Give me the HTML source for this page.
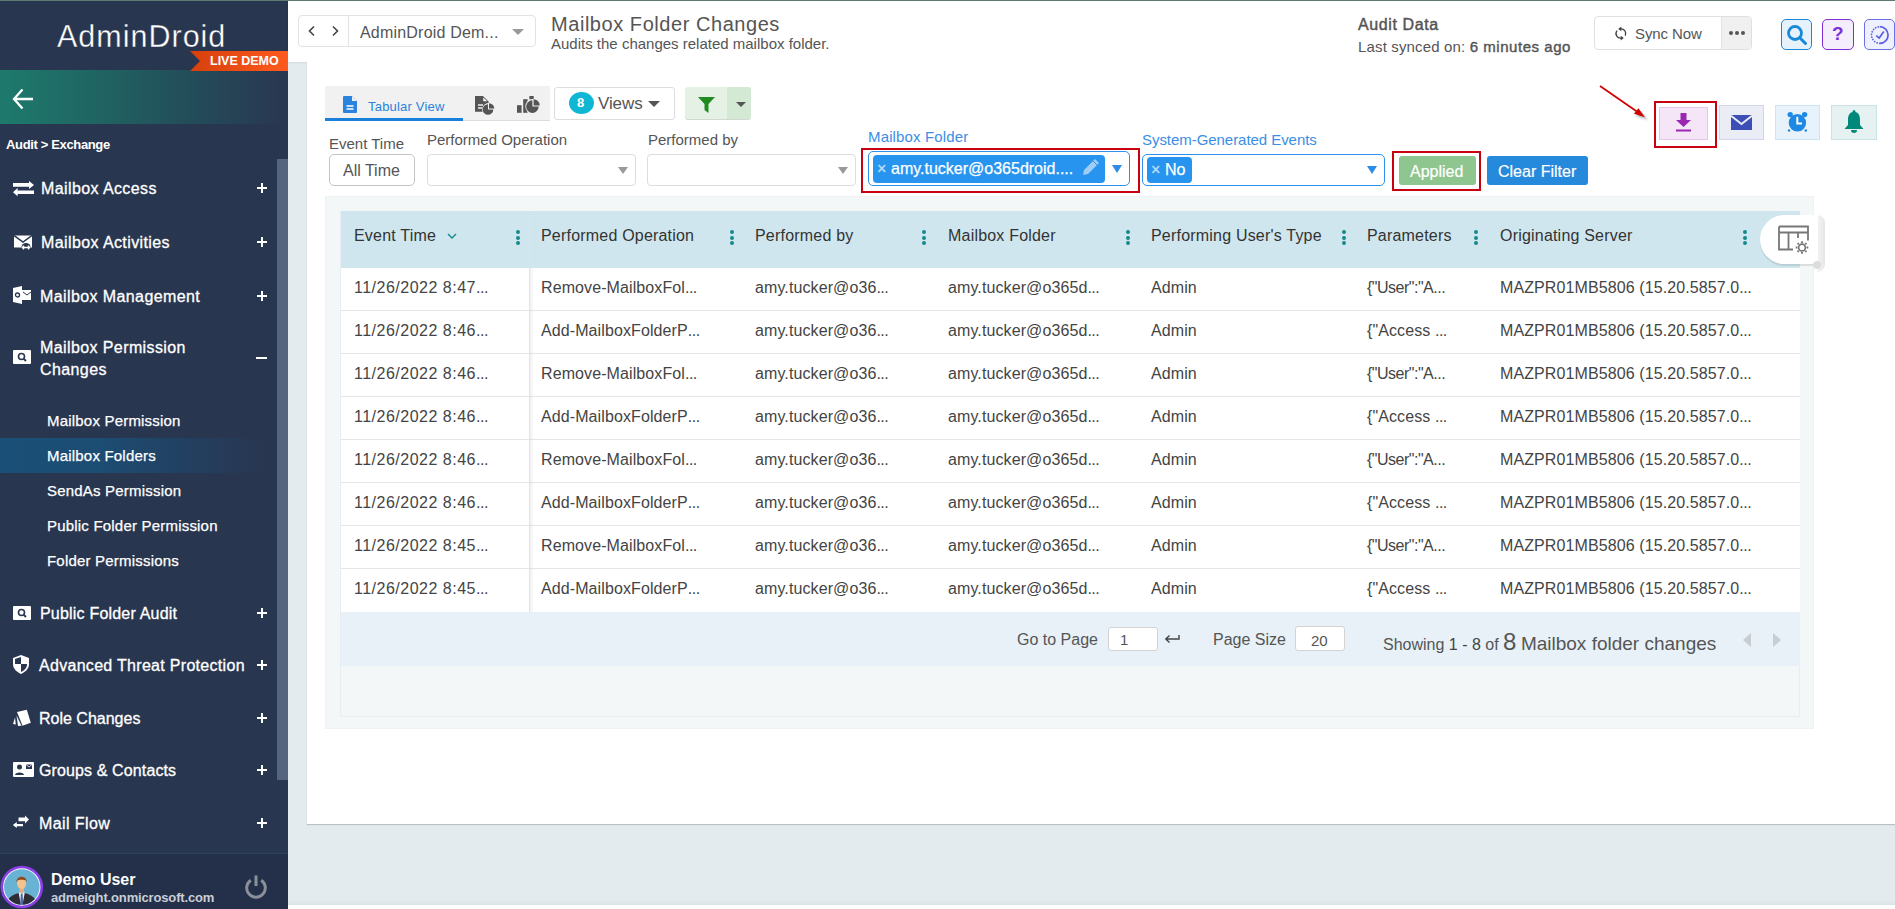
<!DOCTYPE html>
<html><head><meta charset="utf-8">
<style>
*{box-sizing:border-box;margin:0;padding:0}
html,body{width:1895px;height:909px;overflow:hidden}
body{position:relative;background:#e4ebee;font-family:"Liberation Sans",sans-serif;color:#333}
.a{position:absolute}
.nw{white-space:nowrap}
/* sidebar */
#sb{left:0;top:0;width:288px;height:909px;background:#293650}
#topline{left:0;top:0;width:1895px;height:1px;background:#5f7a72;z-index:5}
.mi{position:absolute;left:41px;color:#fff;font-size:16px;letter-spacing:0.4px;-webkit-text-stroke:0.3px #fff;white-space:nowrap;line-height:16px}
.pl{position:absolute;left:257px;width:10px;height:10px;margin-top:1px}
.pl:before{content:"";position:absolute;left:0;top:4px;width:10px;height:2px;background:#fff}
.pl:after{content:"";position:absolute;left:4px;top:0;width:2px;height:10px;background:#fff}
.si{position:absolute;left:47px;color:#fff;font-size:15px;letter-spacing:0.2px;-webkit-text-stroke:0.25px #fff;white-space:nowrap;line-height:15px}
/* header */
#hdr{left:288px;top:0;width:1607px;height:62px;background:#fff;box-shadow:0 1px 2px rgba(0,0,0,0.08)}
#card{left:307px;top:62px;width:1588px;height:762px;background:#fff;box-shadow:0 1px 1px rgba(0,0,0,0.18)}
.lbl{position:absolute;font-size:15px;color:#555;white-space:nowrap;line-height:15px}
.dd{position:absolute;border:1px solid #ddd;border-radius:4px;background:#fff}
.car{position:absolute;width:0;height:0;border-left:5px solid transparent;border-right:5px solid transparent;border-top:7px solid #999}
.th{position:absolute;top:228px;font-size:16px;color:#333;white-space:nowrap;line-height:16px;letter-spacing:0.2px}
.kb{position:absolute;top:230px;width:4px;height:16px}
.kb i{position:absolute;left:0;width:4px;height:4px;border-radius:50%;background:#168a8a}
.td{position:absolute;font-size:16px;color:#444;white-space:nowrap;line-height:16px;letter-spacing:0.1px}
.el{letter-spacing:-0.5px}
.rl{position:absolute;left:341px;width:1459px;height:1px;background:#e6e6e6}
</style></head>
<body>
<div id="topline" class="a"></div>
<!-- SIDEBAR -->
<div id="sb" class="a">
  <div class="a nw" style="left:57px;top:19px;font-size:30.5px;color:#fff;letter-spacing:1.0px;line-height:34px;-webkit-text-stroke:0.35px #293650">AdminDroid</div>
  <svg class="a" style="left:190px;top:51px;z-index:2" width="98" height="20" viewBox="0 0 98 20" preserveAspectRatio="none"><defs><linearGradient id="lg1" x1="0" x2="1"><stop offset="0" stop-color="#d6400c"/><stop offset="1" stop-color="#ff5a1e"/></linearGradient></defs><path d="M0 0H98V20H0L10 10Z" fill="url(#lg1)"/></svg>
  <div class="a nw" style="z-index:3;left:210px;top:54px;font-size:12.5px;font-weight:bold;color:#fff;line-height:14px">LIVE DEMO</div>
  <div class="a" style="left:0;top:70px;width:288px;height:54px;background:linear-gradient(90deg,#1e7a6c 0%,#1f6763 30%,#234d5a 65%,#293650 100%)"></div>
  <svg class="a" style="left:12px;top:88px" width="22" height="22" viewBox="0 0 22 22"><path d="M21 11H3M10.5 1.5L2 11L10.5 20.5" stroke="#fff" stroke-width="2.3" fill="none"/></svg>
  <div class="a nw" style="left:6px;top:138px;font-size:13px;font-weight:bold;color:#fff;line-height:14px;letter-spacing:-0.35px">Audit &gt; Exchange</div>
  <!-- scrollbar -->
  <div class="a" style="left:277px;top:159px;width:11px;height:621px;background:#56657f"></div>

  <!-- menu items -->
  <svg class="a" style="left:13px;top:180px" width="21" height="17" viewBox="0 0 21 17"><path d="M0 3H16V0.9L21 5L16 9V6.8H0Z" fill="#fff"/><path d="M21 10.4H4.6V8L0 12.2L4.6 16.2V14H21Z" fill="#fff"/></svg>
  <div class="mi" style="top:181px">Mailbox Access</div><div class="pl" style="top:182px"></div>

  <svg class="a" style="left:14px;top:235px" width="19" height="17" viewBox="0 0 19 17"><path d="M0 0.5H18V12.5H0Z" fill="#fff"/><path d="M0 0.5L9 7L18 0.5" stroke="#293650" stroke-width="1.5" fill="none"/><circle cx="12" cy="12.5" r="4.6" fill="#293650"/><path d="M8.5 12.5H15.5M10 10.8L8.3 12.5L10 14.2M14 10.8L15.7 12.5L14 14.2" stroke="#fff" stroke-width="1.3" fill="none"/></svg>
  <div class="mi" style="top:235px">Mailbox Activities</div><div class="pl" style="top:236px"></div>

  <svg class="a" style="left:13px;top:286px" width="18" height="18" viewBox="0 0 18 18"><path d="M0 2L9 0V18L0 16Z" fill="#fff"/><rect x="9" y="4" width="9" height="10" fill="#fff"/><circle cx="4.5" cy="9" r="2" stroke="#293650" stroke-width="1.3" fill="none"/><path d="M10 6L14 9L18 6" stroke="#293650" stroke-width="1" fill="none"/></svg>
  <div class="mi" style="top:289px;left:40px">Mailbox Management</div><div class="pl" style="top:290px"></div>

  <svg class="a" style="left:13px;top:350px" width="18" height="14" viewBox="0 0 18 14"><rect x="0" y="0" width="18" height="14" rx="1" fill="#fff"/><circle cx="8.5" cy="6.5" r="3" stroke="#293650" stroke-width="1.6" fill="none"/><path d="M10.8 8.8L13 11" stroke="#293650" stroke-width="1.8"/></svg>
  <div class="mi" style="top:337px;left:40px;line-height:22px">Mailbox Permission<br>Changes</div>
  <div class="a" style="left:256px;top:357px;width:11px;height:2px;background:#fff"></div>

  <div class="si" style="top:413px">Mailbox Permission</div>
  <div class="a" style="left:0;top:438px;width:277px;height:35px;background:linear-gradient(90deg,#1a4f77 0%,#1c4d73 35%,#233f5f 70%,#293650 96%)"></div>
  <div class="si" style="top:448px">Mailbox Folders</div>
  <div class="si" style="top:483px">SendAs Permission</div>
  <div class="si" style="top:518px">Public Folder Permission</div>
  <div class="si" style="top:553px">Folder Permissions</div>

  <svg class="a" style="left:13px;top:606px" width="18" height="14" viewBox="0 0 18 14"><rect x="0" y="0" width="18" height="14" rx="1" fill="#fff"/><circle cx="8.5" cy="6.5" r="3" stroke="#293650" stroke-width="1.6" fill="none"/><path d="M10.8 8.8L13 11" stroke="#293650" stroke-width="1.8"/></svg>
  <div class="mi" style="top:606px;left:40px;letter-spacing:0.2px">Public Folder Audit</div><div class="pl" style="top:607px"></div>

  <svg class="a" style="left:13px;top:655px" width="16" height="19" viewBox="0 0 16 19"><path d="M8 0L16 3V9C16 14 12 17 8 19C4 17 0 14 0 9V3Z" fill="#fff"/><path d="M8 2V9H14V9.5C14 13 11 15.5 8 17V9H2V4Z" fill="#293650"/></svg>
  <div class="mi" style="top:658px;left:39px;letter-spacing:0.3px">Advanced Threat Protection</div><div class="pl" style="top:659px"></div>

  <svg class="a" style="left:12px;top:708px" width="20" height="20" viewBox="0 0 20 20"><path d="M5 4L14.8 1.7L18.8 14.8L10.5 17.7Z" fill="#fff"/><path d="M4.5 7.5L9.5 17.8L6 18Z" fill="#fff"/><path d="M3 9.5L3.8 16.5L1 16Z" fill="#fff"/></svg>
  <div class="mi" style="top:711px;left:39px;letter-spacing:0px">Role Changes</div><div class="pl" style="top:712px"></div>

  <svg class="a" style="left:13px;top:762px" width="21" height="15" viewBox="0 0 21 15"><rect x="0" y="0" width="21" height="15" rx="1" fill="#fff"/><circle cx="6.5" cy="5" r="2.5" fill="#293650"/><path d="M2 13C2 9.5 11 9.5 11 13Z" fill="#293650"/><rect x="13" y="2.5" width="6" height="4.5" fill="#293650"/><path d="M13 2.5L16 5L19 2.5" stroke="#fff" stroke-width="0.8" fill="none"/></svg>
  <div class="mi" style="top:763px;left:39px;letter-spacing:0.12px">Groups &amp; Contacts</div><div class="pl" style="top:764px"></div>

  <svg class="a" style="left:12px;top:815px" width="19" height="15" viewBox="0 0 19 15"><path d="M6.5 2.5H13V0.5L17 4.5L13 8.5V6.3H6.5Z" fill="#fff"/><path d="M11 9H4.8V7L0.8 10L4.8 13V11.2H11Z" fill="#fff"/></svg>
  <div class="mi" style="top:816px;left:39px">Mail Flow</div><div class="pl" style="top:817px"></div>

  <!-- footer -->
  <div class="a" style="left:0;top:853px;width:288px;height:56px;background:#24304a;border-top:1px solid #2b4560"></div>
  <svg class="a" style="left:0;top:865px" width="44" height="44" viewBox="0 0 44 44"><defs><clipPath id="avc"><circle cx="21.8" cy="22" r="17.8"/></clipPath></defs><circle cx="21.8" cy="22" r="21.3" fill="#8a3ee6"/><circle cx="21.8" cy="22" r="18.7" fill="#f4f8fb"/><circle cx="21.8" cy="22" r="17.8" fill="#68b2d4"/><g clip-path="url(#avc)"><rect x="19.5" y="22" width="4.5" height="6" fill="#e6ae7e"/><ellipse cx="21.6" cy="18" rx="4.6" ry="6" fill="#f3c28e"/><path d="M16.5 18C15.5 9.8 27.7 9.8 26.7 18L26.2 16C25.5 14.5 18.5 14 17 16Z" fill="#8c4a1c"/><path d="M6 44C6 32 13 29 21.7 27.5C30.4 29 37.5 32 37.5 44Z" fill="#2e2e34"/><path d="M18.6 27.5L21.7 44L24.8 27.5Z" fill="#f2f4f8"/><path d="M20.8 28.5H22.6L23.2 40L21.7 44L20.2 40Z" fill="#4b69a6"/></g></svg>
  <div class="a nw" style="left:51px;top:871px;font-size:16px;font-weight:bold;color:#fff;line-height:18px">Demo User</div>
  <div class="a nw" style="left:51px;top:891px;font-size:13px;font-weight:bold;color:#c9ced6;line-height:14px;letter-spacing:-0.15px">admeight.onmicrosoft.com</div>
  <svg class="a" style="left:243px;top:874px" width="26" height="26" viewBox="0 0 26 26"><path d="M7.8 6.2A9.3 9.3 0 1 0 18.2 6.2" stroke="#8a8f98" stroke-width="3" fill="none"/><path d="M13 1.5V12" stroke="#8a8f98" stroke-width="3"/></svg>
</div>

<!-- HEADER -->
<div id="hdr" class="a"></div>
<div id="card" class="a"></div>
<!-- header contents -->
<div class="a" style="left:298px;top:15px;width:238px;height:32px;border:1px solid #e2e2e2;border-radius:4px;background:#fff"></div>
<div class="a" style="left:348px;top:16px;width:1px;height:30px;background:#e2e2e2"></div>
<svg class="a" style="left:307px;top:25px" width="10" height="12" viewBox="0 0 10 12"><path d="M7 1.5L2.5 6L7 10.5" stroke="#444" stroke-width="1.6" fill="none"/></svg>
<svg class="a" style="left:330px;top:25px" width="10" height="12" viewBox="0 0 10 12"><path d="M3 1.5L7.5 6L3 10.5" stroke="#444" stroke-width="1.6" fill="none"/></svg>
<div class="a nw" style="left:360px;top:24px;font-size:16px;color:#555;line-height:18px;letter-spacing:0.2px">AdminDroid Dem...</div>
<div class="car" style="left:512px;top:29px;border-left-width:6px;border-right-width:6px;border-top-width:6px;border-top-color:#999"></div>

<div class="a nw" style="left:551px;top:12px;font-size:20px;color:#555;line-height:24px;letter-spacing:0.55px">Mailbox Folder Changes</div>
<div class="a nw" style="left:551px;top:36px;font-size:15px;color:#555;line-height:16px">Audits the changes related mailbox folder.</div>

<div class="a nw" style="left:1358px;top:16px;font-size:16px;color:#555;line-height:18px;letter-spacing:0.6px;-webkit-text-stroke:0.45px #555">Audit Data</div>
<div class="a nw" style="left:1358px;top:38px;font-size:15px;color:#555;line-height:17px;letter-spacing:0.15px">Last synced on: <span style="letter-spacing:0.55px;-webkit-text-stroke:0.4px #555">6 minutes ago</span></div>

<div class="a" style="left:1594px;top:16px;width:158px;height:34px;border:1px solid #e0e0e0;border-radius:4px;background:#fff;overflow:hidden"><div class="a" style="left:126px;top:0;width:32px;height:34px;background:#f0f0f0;border-left:1px solid #e3e3e3"></div></div>
<svg class="a" style="left:1614px;top:26px" width="14" height="15" viewBox="0 0 14 15"><path d="M6.5 2.9A4.6 4.6 0 0 1 11.2 9.6" stroke="#444" stroke-width="1.3" fill="none"/><path d="M7.3 0.6L4.2 2.9L7.3 5.2Z" fill="#444"/><path d="M3.1 4.6A4.6 4.6 0 0 0 7.5 12.1" stroke="#444" stroke-width="1.3" fill="none"/><path d="M6.7 9.8L9.8 12.1L6.7 14.4Z" fill="#444"/></svg>
<div class="a nw" style="left:1635px;top:25px;font-size:15px;color:#555;line-height:17px;letter-spacing:-0.1px">Sync Now</div>
<div class="a" style="left:1729px;top:31px;width:4px;height:4px;border-radius:50%;background:#555;box-shadow:6px 0 0 #555,12px 0 0 #555"></div>

<div class="a" style="left:1781px;top:19px;width:31px;height:31px;border:1.5px solid #1a88d8;border-radius:5px;background:#e5f2fc"></div>
<svg class="a" style="left:1786px;top:24px" width="22" height="22" viewBox="0 0 22 22"><circle cx="9" cy="9" r="6.5" stroke="#1a88d8" stroke-width="2.8" fill="none"/><path d="M14 14L19.5 19.5" stroke="#1a88d8" stroke-width="3" stroke-linecap="round"/></svg>
<div class="a" style="left:1822px;top:19px;width:32px;height:31px;border:1.5px solid #7e2fd8;border-radius:5px;background:#f4edfc"></div>
<div class="a nw" style="left:1832px;top:22px;font-size:19px;font-weight:bold;color:#7e2fd8;line-height:24px">?</div>
<div class="a" style="left:1864px;top:19px;width:31px;height:31px;border:1.5px solid #6b70e6;border-radius:5px;background:#eef0fd"></div>
<svg class="a" style="left:1869px;top:24px" width="22" height="22" viewBox="0 0 22 22"><path d="M10.8 2.7A8.3 8.3 0 0 1 10.8 19.3" stroke="#5b5fe6" stroke-width="1.7" fill="none"/><path d="M10.8 19.3A8.3 8.3 0 0 1 10.8 2.7" stroke="#5b5fe6" stroke-width="1.7" stroke-dasharray="0.1 2.6" stroke-linecap="round" fill="none"/><path d="M7.2 11.7L10.2 14L14.8 7.4" stroke="#5b5fe6" stroke-width="1.7" fill="none"/></svg>

<!-- toolbar -->
<div class="a" style="left:325px;top:86px;width:225px;height:35px;background:#f1f1f1;border-bottom:1px solid #ddd"></div>
<div class="a" style="left:325px;top:118px;width:138px;height:3px;background:#1a7fd9"></div>
<svg class="a" style="left:343px;top:96px" width="14" height="17" viewBox="0 0 14 17"><path d="M1 0H9L14 5V16A1 1 0 0 1 13 17H1A1 1 0 0 1 0 16V1A1 1 0 0 1 1 0Z" fill="#2a84de"/><path d="M9 0V5H14" fill="#fff" opacity="0.9"/><path d="M3.5 10H10.5M3.5 13H10.5" stroke="#fff" stroke-width="1.3"/></svg>
<div class="a nw" style="left:368px;top:100px;font-size:13px;color:#2a84de;line-height:14px;letter-spacing:0.2px">Tabular View</div>
<svg class="a" style="left:475px;top:95px" width="22" height="22" viewBox="0 0 22 22"><path d="M0 1H8L13.5 6.5V16.8H0Z" fill="#555"/><path d="M8.3 2.4L12.2 6.3H8.3Z" fill="#fff"/><path d="M3 10H8M3 13H7" stroke="#f1f1f1" stroke-width="1.3"/><circle cx="13.5" cy="14.5" r="6.4" fill="#f1f1f1"/><path d="M13 14.5V9.2A5.3 5.3 0 1 0 18.3 14.5Z" fill="#555"/><path d="M14 13.5V8.2A5.3 5.3 0 0 1 19.3 13.5Z" fill="#555"/></svg>
<svg class="a" style="left:516px;top:95px" width="26" height="22" viewBox="0 0 26 22"><rect x="1" y="10.2" width="4.6" height="7.6" fill="#555"/><rect x="7.2" y="4.2" width="4.4" height="13.6" fill="#555"/><rect x="13.4" y="1" width="4.3" height="3.5" fill="#555"/><circle cx="16.9" cy="11.6" r="7.6" fill="#f1f1f1"/><path d="M16.4 11.6V5.3A6.3 6.3 0 1 0 22.7 11.6Z" fill="#555"/><path d="M17.6 10.4V4.3A6.1 6.1 0 0 1 23.7 10.4Z" fill="#555"/></svg>

<div class="a" style="left:554px;top:87px;width:121px;height:33px;border:1px solid #ddd;border-radius:3px;background:#fff"></div>
<div class="a" style="left:569px;top:92px;width:25px;height:22px;border-radius:50%;background:#0fb7d4"></div>
<div class="a nw" style="left:577px;top:96px;font-size:13px;font-weight:bold;color:#fff;line-height:14px">8</div>
<div class="a nw" style="left:598px;top:94px;font-size:17px;color:#555;line-height:19px;letter-spacing:-0.1px">Views</div>
<div class="car" style="left:648px;top:101px;border-left-width:6px;border-right-width:6px;border-top-width:6px;border-top-color:#555"></div>

<div class="a" style="left:685px;top:87px;width:66px;height:32px;border-radius:3px;background:#e6f1e6;overflow:hidden;box-shadow:0 1px 0 #d0d8d0"><div class="a" style="left:42px;top:0;width:24px;height:32px;background:#d4e9d4"></div></div>
<svg class="a" style="left:698px;top:97px" width="17" height="16" viewBox="0 0 17 16"><path d="M0 0H17L10.5 7V16L6.5 13V7Z" fill="#218a21"/></svg>
<div class="car" style="left:736px;top:102px;border-left-width:5.5px;border-right-width:5.5px;border-top-width:5px;border-top-color:#555"></div>

<!-- filters -->
<div class="lbl" style="left:329px;top:136px;color:#555">Event Time</div>
<div class="a" style="left:329px;top:154px;width:86px;height:32px;border:1px solid #c3c3c3;border-radius:5px;background:#fff"></div>
<div class="a nw" style="left:343px;top:162px;font-size:16px;color:#555;line-height:18px">All Time</div>

<div class="lbl" style="left:427px;top:132px">Performed Operation</div>
<div class="dd" style="left:427px;top:154px;width:209px;height:32px"></div>
<div class="car" style="left:618px;top:167px"></div>

<div class="lbl" style="left:648px;top:132px;letter-spacing:0px">Performed by</div>
<div class="dd" style="left:647px;top:154px;width:209px;height:32px"></div>
<div class="car" style="left:838px;top:167px"></div>

<div class="lbl" style="left:868px;top:129px;color:#3b8ee6;letter-spacing:0.15px">Mailbox Folder</div>
<div class="a" style="left:861px;top:148px;width:279px;height:45px;border:2px solid #c8000f"></div>
<div class="a" style="left:868px;top:151px;width:262px;height:35px;border:1px solid #2c90ec;border-radius:5px;background:#fff"></div>
<div class="a" style="left:873px;top:155px;width:232px;height:28px;border-radius:4px;background:#2795f0"></div>
<div class="a nw" style="left:877px;top:160px;font-size:16px;color:#bcdcf8;line-height:18px;-webkit-text-stroke:0.4px #bcdcf8">×</div>
<div class="a nw" style="left:891px;top:160px;font-size:16px;color:#fff;line-height:18px;-webkit-text-stroke:0.25px #fff">amy.tucker@o365droid....</div>
<svg class="a" style="left:1082px;top:158px" width="18" height="18" viewBox="0 0 18 18"><path d="M13 1L17 5L6 16L1 17L2 12Z" fill="#9fcdf6"/><path d="M11 3L15 7" stroke="#2795f0" stroke-width="1"/></svg>
<div class="car" style="left:1112px;top:165px;border-top-color:#2c8ce6;border-left-width:5.5px;border-right-width:5.5px;border-top-width:8px"></div>

<div class="lbl" style="left:1142px;top:132px;color:#3b8ee6;letter-spacing:-0.05px">System-Generated Events</div>
<div class="a" style="left:1142px;top:154px;width:243px;height:32px;border:1px solid #2c90ec;border-radius:5px;background:#fff"></div>
<div class="a" style="left:1147px;top:157px;width:45px;height:26px;border-radius:4px;background:#2795f0"></div>
<div class="a nw" style="left:1151px;top:161px;font-size:16px;color:#bcdcf8;line-height:18px;-webkit-text-stroke:0.4px #bcdcf8">×</div>
<div class="a nw" style="left:1165px;top:161px;font-size:16px;color:#fff;line-height:18px;-webkit-text-stroke:0.25px #fff">No</div>
<div class="car" style="left:1367px;top:166px;border-top-color:#2c8ce6;border-left-width:5.5px;border-right-width:5.5px;border-top-width:8px"></div>

<div class="a" style="left:1392px;top:151px;width:89px;height:40px;border:2px solid #c8000f"></div>
<div class="a" style="left:1399px;top:156px;width:77px;height:29px;border-radius:3px;background:#8fc58e"></div>
<div class="a nw" style="left:1410px;top:163px;font-size:16px;color:#fff;line-height:18px;-webkit-text-stroke:0.2px #fff">Applied</div>
<div class="a" style="left:1487px;top:156px;width:101px;height:29px;border-radius:3px;background:#2589dc"></div>
<div class="a nw" style="left:1498px;top:163px;font-size:16px;color:#fff;line-height:18px;-webkit-text-stroke:0.2px #fff">Clear Filter</div>

<!-- action icons -->
<svg class="a" style="left:1596px;top:83px" width="60" height="42" viewBox="0 0 60 42"><defs><filter id="ash" x="-50%" y="-50%" width="200%" height="200%"><feGaussianBlur stdDeviation="1.2"/></filter></defs><path d="M40 33L52 37L44 28Z" fill="#777" opacity="0.55" filter="url(#ash)"/><path d="M4 3L40.5 28.3" stroke="#d00000" stroke-width="1.7"/><path d="M49 34.3L38 30.7L42.4 25.2Z" fill="#d00000"/></svg>
<div class="a" style="left:1654px;top:101px;width:63px;height:47px;border:2px solid #c8000f"></div>
<div class="a" style="left:1659px;top:107px;width:49px;height:33px;background:#f4e6f6;border:1px solid #e6c4ec"></div>
<svg class="a" style="left:1675px;top:113px" width="17" height="19" viewBox="0 0 17 19"><path d="M5.5 0H11.5V7H16L8.5 14L1 7H5.5Z" fill="#9a27b2"/><rect x="1" y="16.5" width="15" height="2" fill="#9a27b2"/></svg>
<div class="a" style="left:1719px;top:105px;width:45px;height:35px;background:#eaecf6;border:1px solid #d6d3ef"></div>
<svg class="a" style="left:1731px;top:115px" width="21" height="15" viewBox="0 0 21 15"><rect x="0" y="0" width="21" height="15" fill="#3d4fb6"/><path d="M0 0.8L10.5 9L21 0.8" stroke="#e9ebf6" stroke-width="2" fill="none"/></svg>
<div class="a" style="left:1775px;top:105px;width:45px;height:35px;background:#e8f2fa;border:1px solid #cbe5f3"></div>
<svg class="a" style="left:1786px;top:111px" width="24" height="24" viewBox="0 0 24 24"><circle cx="4.2" cy="3.6" r="2.7" fill="#1e88e5"/><circle cx="18.6" cy="3.6" r="2.7" fill="#1e88e5"/><circle cx="11.4" cy="11.8" r="8.7" fill="#1e88e5"/><path d="M3.5 18.5L2.5 20.5M19.3 18.5L20.3 20.5" stroke="#1e88e5" stroke-width="2.2"/><path d="M11.3 5.8V12.6H16" stroke="#fff" stroke-width="2" fill="none"/></svg>
<div class="a" style="left:1831px;top:105px;width:46px;height:35px;background:#e6f2f2;border:1px solid #c9e3e6"></div>
<svg class="a" style="left:1844px;top:110px" width="20" height="24" viewBox="0 0 20 24"><path d="M10 0C11 0 11.5 1 11.5 2C15 3 16 6 16 10V15L19.5 19H0.5L4 15V10C4 6 5 3 8.5 2C8.5 1 9 0 10 0Z" fill="#00897b"/><path d="M7 20H13A3 3 0 0 1 7 20Z" fill="#00897b"/></svg>

<!-- TABLE -->
<div class="a" style="left:325px;top:196px;width:1489px;height:533px;background:#f3f7f8;border:1px solid #eef2f4"></div>
<div class="a" style="left:340px;top:211px;width:1460px;height:506px;background:#f3f7f8;border:1px solid #e7edf0"></div>
<div class="a" style="left:341px;top:211px;width:1459px;height:57px;background:#cfe6ee"></div>
<div class="a" style="left:341px;top:268px;width:1459px;height:344px;background:#fff"></div>
<div class="a" style="left:341px;top:612px;width:1459px;height:54px;background:#e7f1f7"></div>

<div class="th" style="left:354px">Event Time</div>
<div class="th" style="left:541px">Performed Operation</div>
<div class="th" style="left:755px">Performed by</div>
<div class="th" style="left:948px">Mailbox Folder</div>
<div class="th" style="left:1151px">Performing User's Type</div>
<div class="th" style="left:1367px">Parameters</div>
<div class="th" style="left:1500px">Originating Server</div>
<div class="kb" style="left:516px"><i style="top:0"></i><i style="top:5.5px"></i><i style="top:11px"></i></div>
<div class="kb" style="left:730px"><i style="top:0"></i><i style="top:5.5px"></i><i style="top:11px"></i></div>
<div class="kb" style="left:922px"><i style="top:0"></i><i style="top:5.5px"></i><i style="top:11px"></i></div>
<div class="kb" style="left:1126px"><i style="top:0"></i><i style="top:5.5px"></i><i style="top:11px"></i></div>
<div class="kb" style="left:1342px"><i style="top:0"></i><i style="top:5.5px"></i><i style="top:11px"></i></div>
<div class="kb" style="left:1474px"><i style="top:0"></i><i style="top:5.5px"></i><i style="top:11px"></i></div>
<div class="kb" style="left:1743px"><i style="top:0"></i><i style="top:5.5px"></i><i style="top:11px"></i></div>
<svg class="a" style="left:447px;top:233px" width="10" height="7" viewBox="0 0 10 7"><path d="M1 1L5 5L9 1" stroke="#168a8a" stroke-width="1.4" fill="none"/></svg>
<div class="td" style="left:354px;top:280px;letter-spacing:0.5px">11/26/2022 8:47<span class="el">...</span></div>
<div class="td" style="left:541px;top:280px">Remove-MailboxFol<span class="el">...</span></div>
<div class="td" style="left:755px;top:280px">amy.tucker@o36<span class="el">...</span></div>
<div class="td" style="left:948px;top:280px">amy.tucker@o365d<span class="el">...</span></div>
<div class="td" style="left:1151px;top:280px">Admin</div>
<div class="td" style="left:1367px;top:280px;letter-spacing:-0.5px">{&quot;User&quot;:&quot;A<span class="el">...</span></div>
<div class="td" style="left:1500px;top:280px">MAZPR01MB5806 (15.20.5857.0<span class="el">...</span></div>
<div class="rl" style="top:310px"></div>
<div class="td" style="left:354px;top:323px;letter-spacing:0.5px">11/26/2022 8:46<span class="el">...</span></div>
<div class="td" style="left:541px;top:323px">Add-MailboxFolderP<span class="el">...</span></div>
<div class="td" style="left:755px;top:323px">amy.tucker@o36<span class="el">...</span></div>
<div class="td" style="left:948px;top:323px">amy.tucker@o365d<span class="el">...</span></div>
<div class="td" style="left:1151px;top:323px">Admin</div>
<div class="td" style="left:1367px;top:323px">{&quot;Access <span class="el">...</span></div>
<div class="td" style="left:1500px;top:323px">MAZPR01MB5806 (15.20.5857.0<span class="el">...</span></div>
<div class="rl" style="top:353px"></div>
<div class="td" style="left:354px;top:366px;letter-spacing:0.5px">11/26/2022 8:46<span class="el">...</span></div>
<div class="td" style="left:541px;top:366px">Remove-MailboxFol<span class="el">...</span></div>
<div class="td" style="left:755px;top:366px">amy.tucker@o36<span class="el">...</span></div>
<div class="td" style="left:948px;top:366px">amy.tucker@o365d<span class="el">...</span></div>
<div class="td" style="left:1151px;top:366px">Admin</div>
<div class="td" style="left:1367px;top:366px;letter-spacing:-0.5px">{&quot;User&quot;:&quot;A<span class="el">...</span></div>
<div class="td" style="left:1500px;top:366px">MAZPR01MB5806 (15.20.5857.0<span class="el">...</span></div>
<div class="rl" style="top:396px"></div>
<div class="td" style="left:354px;top:409px;letter-spacing:0.5px">11/26/2022 8:46<span class="el">...</span></div>
<div class="td" style="left:541px;top:409px">Add-MailboxFolderP<span class="el">...</span></div>
<div class="td" style="left:755px;top:409px">amy.tucker@o36<span class="el">...</span></div>
<div class="td" style="left:948px;top:409px">amy.tucker@o365d<span class="el">...</span></div>
<div class="td" style="left:1151px;top:409px">Admin</div>
<div class="td" style="left:1367px;top:409px">{&quot;Access <span class="el">...</span></div>
<div class="td" style="left:1500px;top:409px">MAZPR01MB5806 (15.20.5857.0<span class="el">...</span></div>
<div class="rl" style="top:439px"></div>
<div class="td" style="left:354px;top:452px;letter-spacing:0.5px">11/26/2022 8:46<span class="el">...</span></div>
<div class="td" style="left:541px;top:452px">Remove-MailboxFol<span class="el">...</span></div>
<div class="td" style="left:755px;top:452px">amy.tucker@o36<span class="el">...</span></div>
<div class="td" style="left:948px;top:452px">amy.tucker@o365d<span class="el">...</span></div>
<div class="td" style="left:1151px;top:452px">Admin</div>
<div class="td" style="left:1367px;top:452px;letter-spacing:-0.5px">{&quot;User&quot;:&quot;A<span class="el">...</span></div>
<div class="td" style="left:1500px;top:452px">MAZPR01MB5806 (15.20.5857.0<span class="el">...</span></div>
<div class="rl" style="top:482px"></div>
<div class="td" style="left:354px;top:495px;letter-spacing:0.5px">11/26/2022 8:46<span class="el">...</span></div>
<div class="td" style="left:541px;top:495px">Add-MailboxFolderP<span class="el">...</span></div>
<div class="td" style="left:755px;top:495px">amy.tucker@o36<span class="el">...</span></div>
<div class="td" style="left:948px;top:495px">amy.tucker@o365d<span class="el">...</span></div>
<div class="td" style="left:1151px;top:495px">Admin</div>
<div class="td" style="left:1367px;top:495px">{&quot;Access <span class="el">...</span></div>
<div class="td" style="left:1500px;top:495px">MAZPR01MB5806 (15.20.5857.0<span class="el">...</span></div>
<div class="rl" style="top:525px"></div>
<div class="td" style="left:354px;top:538px;letter-spacing:0.5px">11/26/2022 8:45<span class="el">...</span></div>
<div class="td" style="left:541px;top:538px">Remove-MailboxFol<span class="el">...</span></div>
<div class="td" style="left:755px;top:538px">amy.tucker@o36<span class="el">...</span></div>
<div class="td" style="left:948px;top:538px">amy.tucker@o365d<span class="el">...</span></div>
<div class="td" style="left:1151px;top:538px">Admin</div>
<div class="td" style="left:1367px;top:538px;letter-spacing:-0.5px">{&quot;User&quot;:&quot;A<span class="el">...</span></div>
<div class="td" style="left:1500px;top:538px">MAZPR01MB5806 (15.20.5857.0<span class="el">...</span></div>
<div class="rl" style="top:568px"></div>
<div class="td" style="left:354px;top:581px;letter-spacing:0.5px">11/26/2022 8:45<span class="el">...</span></div>
<div class="td" style="left:541px;top:581px">Add-MailboxFolderP<span class="el">...</span></div>
<div class="td" style="left:755px;top:581px">amy.tucker@o36<span class="el">...</span></div>
<div class="td" style="left:948px;top:581px">amy.tucker@o365d<span class="el">...</span></div>
<div class="td" style="left:1151px;top:581px">Admin</div>
<div class="td" style="left:1367px;top:581px">{&quot;Access <span class="el">...</span></div>
<div class="td" style="left:1500px;top:581px">MAZPR01MB5806 (15.20.5857.0<span class="el">...</span></div>
<div class="a" style="left:529px;top:215px;width:1px;height:397px;background:#dde5e9"></div>
<div class="a" style="left:530px;top:268px;width:4px;height:344px;background:linear-gradient(90deg,rgba(0,0,0,0.06),rgba(0,0,0,0))"></div>
<!-- col settings -->
<div class="a" style="left:1817px;top:215px;width:8px;height:57px;border-radius:0 9px 9px 0;background:linear-gradient(90deg,#f4f4f4,#e6e6e6)"></div><div class="a" style="left:1760px;top:215px;width:58px;height:49px;border-radius:25px 0 0 25px;background:#fff;box-shadow:0 2px 1px rgba(0,0,0,0.10)"></div><div class="a" style="left:1813px;top:261px;width:8px;height:8px;border-radius:50%;background:#dcdcdc"></div>
<svg class="a" style="left:1778px;top:225px" width="32" height="31" viewBox="0 0 32 31"><path d="M1 1.5H30V15.5M1 1.5V24.5H15M1 7.5H30M10.5 7.5V24.5M20 7.5V13" stroke="#777" stroke-width="1.8" fill="none"/><circle cx="24" cy="22.5" r="3.4" stroke="#777" stroke-width="1.7" fill="none"/><path d="M28.60 22.50L30.30 22.50M27.25 25.75L28.45 26.95M24.00 27.10L24.00 28.80M20.75 25.75L19.55 26.95M19.40 22.50L17.70 22.50M20.75 19.25L19.55 18.05M24.00 17.90L24.00 16.20M27.25 19.25L28.45 18.05" stroke="#777" stroke-width="1.9"/></svg>
<!-- pagination -->
<div class="a nw" style="left:1017px;top:631px;font-size:16px;color:#555;line-height:18px">Go to Page</div>
<div class="a" style="left:1108px;top:627px;width:50px;height:24px;border:1px solid #d3d3d3;border-radius:3px;background:#fff"></div>
<div class="a nw" style="left:1120px;top:631px;font-size:15px;color:#555;line-height:17px">1</div>
<svg class="a" style="left:1164px;top:634px" width="16" height="10" viewBox="0 0 16 10"><path d="M15 1V5H2M5.5 1.5L1.8 5L5.5 8.5" stroke="#444" stroke-width="1.4" fill="none"/></svg>
<div class="a nw" style="left:1213px;top:631px;font-size:16px;color:#555;line-height:18px">Page Size</div>
<div class="a" style="left:1295px;top:626px;width:50px;height:25px;border:1px solid #d3d3d3;border-radius:3px;background:#fff"></div>
<div class="a nw" style="left:1311px;top:632px;font-size:15px;color:#555;line-height:17px">20</div>
<div class="a nw" style="left:1383px;top:630px;font-size:16px;color:#555;line-height:24px">Showing <span style="color:#444">1 - 8</span> of <span style="font-size:24px;color:#555">8</span> <span style="font-size:19px">Mailbox folder changes</span></div>
<svg class="a" style="left:1741px;top:633px" width="42" height="14" viewBox="0 0 42 14"><path d="M10 0V14L2 7Z" fill="#c9cdd0"/><path d="M32 0V14L40 7Z" fill="#c9cdd0"/></svg>
<!-- bottom white strip -->
<div class="a" style="left:288px;top:899px;width:1607px;height:6px;background:linear-gradient(180deg,rgba(0,0,0,0),rgba(0,0,0,0.03))"></div><div class="a" style="left:288px;top:905px;width:1607px;height:4px;background:#fff"></div>

</body></html>
